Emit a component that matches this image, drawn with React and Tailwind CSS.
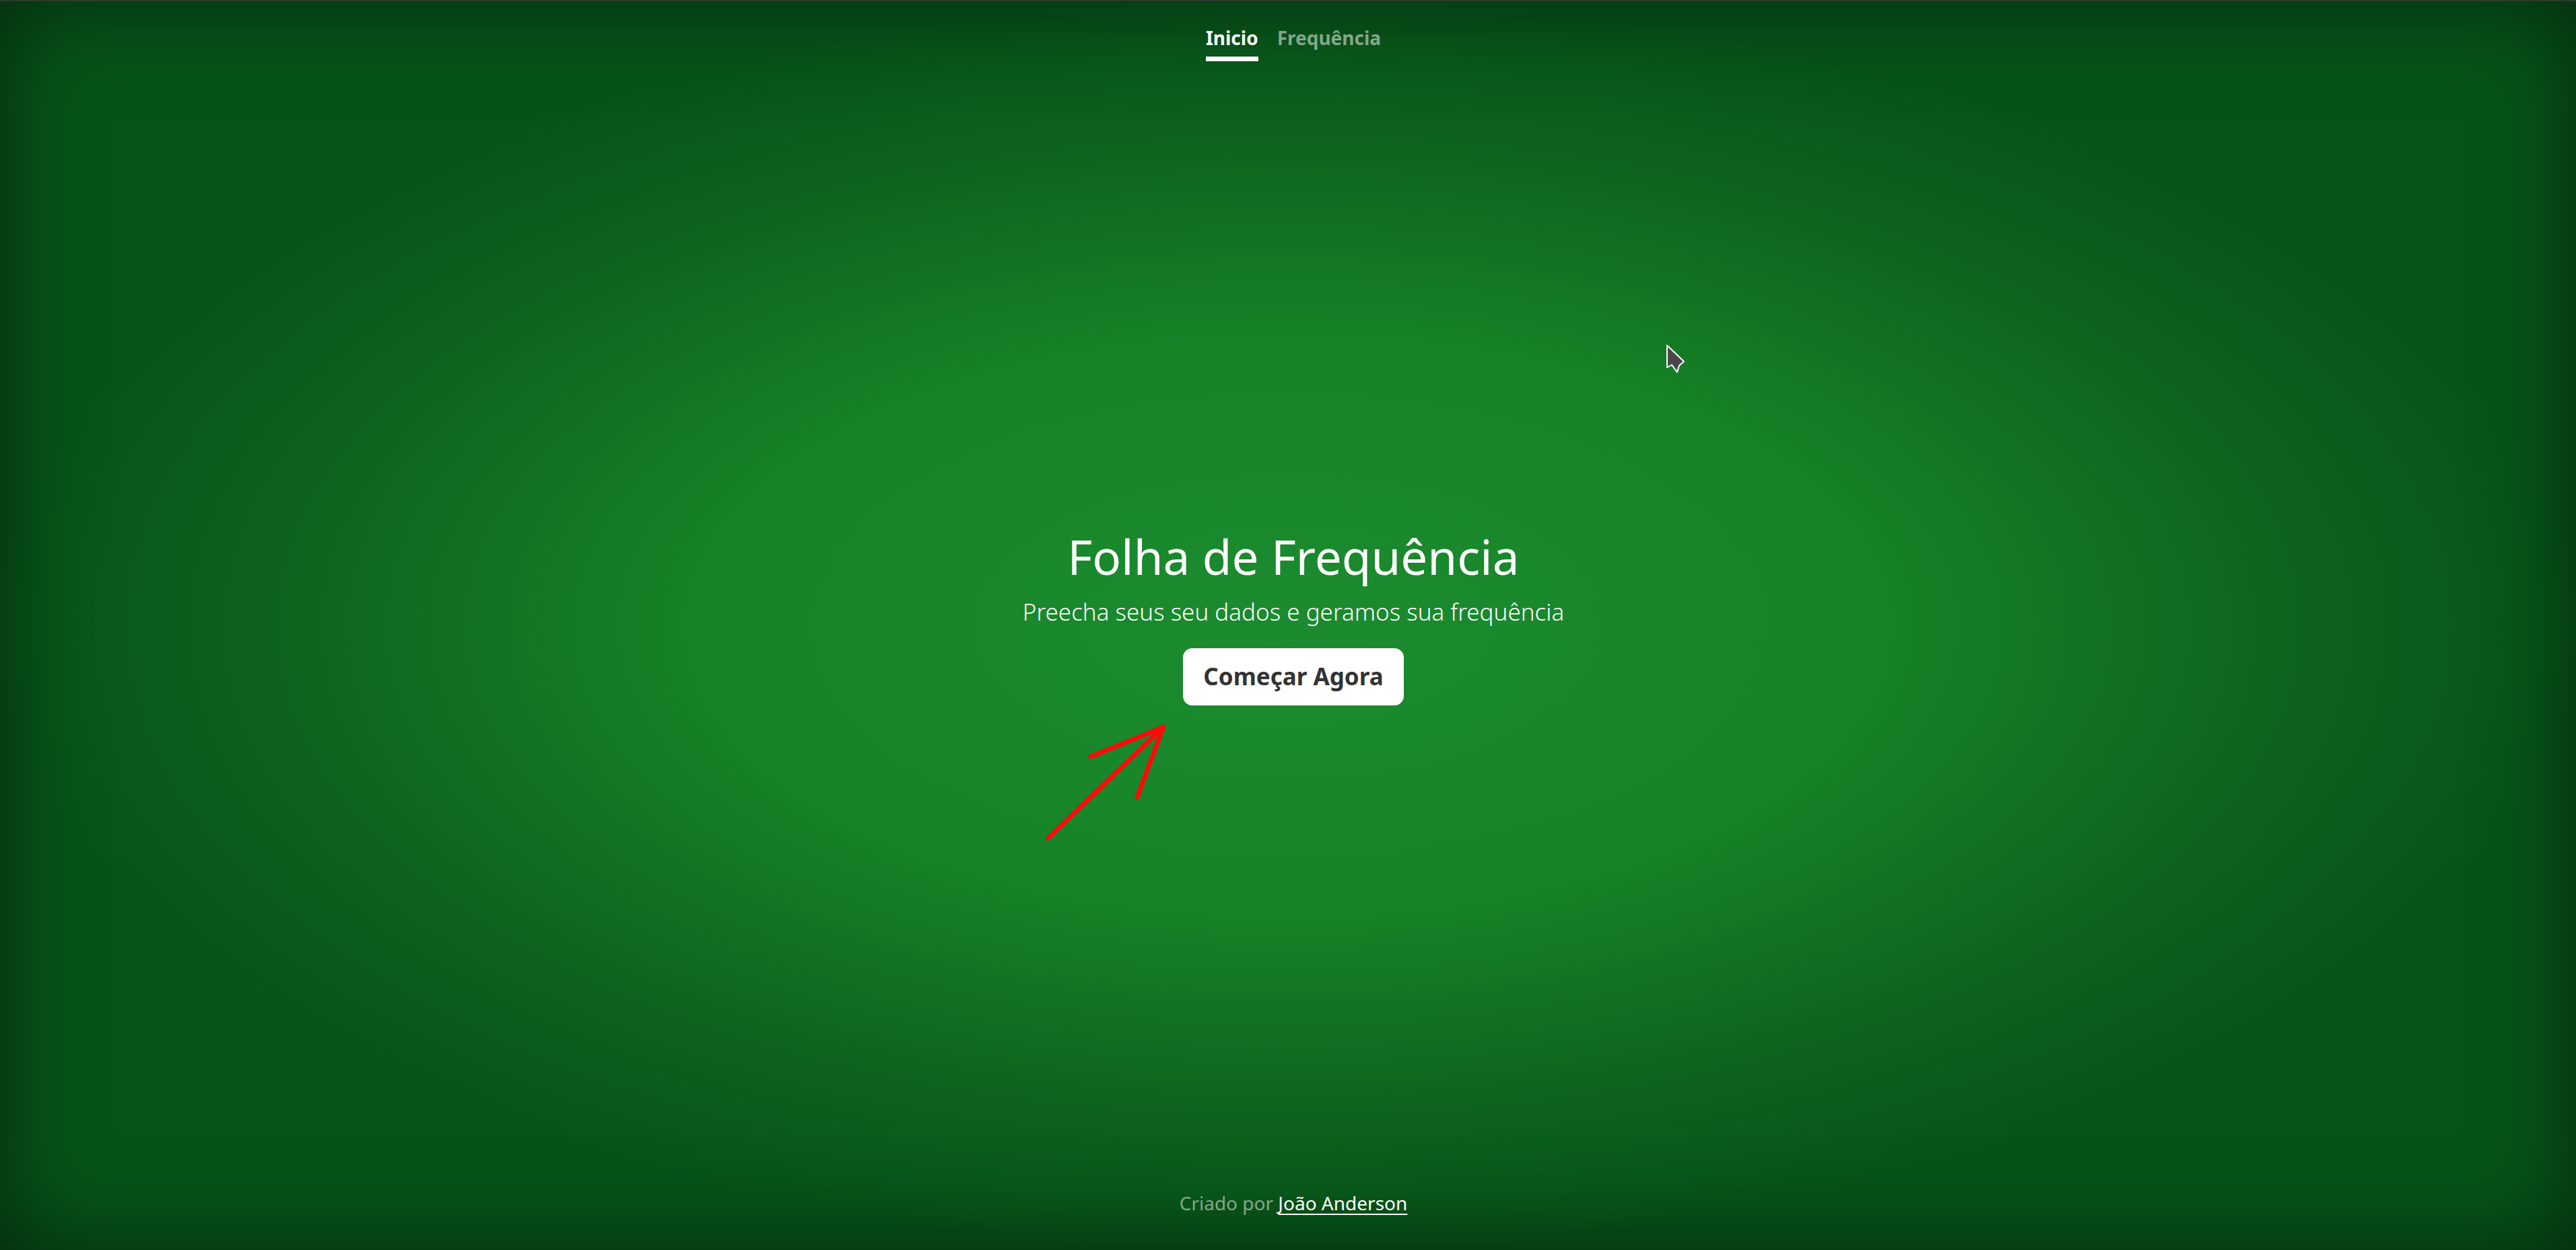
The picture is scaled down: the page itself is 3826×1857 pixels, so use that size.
import React from "react";

function Cursor() {
  return (
    <svg
      className="absolute left-[2474px] top-[509px]"
      width="30"
      height="46"
      viewBox="0 0 30 46"
    >
      <polygon
        points="2,2 2,35 9,31 17,42 20,32 27,26"
        fill="#4b4649"
        stroke="#ffffff"
        strokeWidth="2"
        strokeLinejoin="round"
      />
    </svg>
  );
}

function RedArrow() {
  return (
    <svg
      className="absolute left-[1540px] top-[1060px]"
      width="210"
      height="200"
      viewBox="0 0 210 200"
    >
      <g stroke="#ff0a0a" strokeWidth="7" strokeLinecap="round" fill="none">
        <line x1="17" y1="183" x2="188" y2="18" />
        <line x1="80" y1="62" x2="188" y2="18" />
        <line x1="149" y1="122" x2="188" y2="18" />
      </g>
    </svg>
  );
}

export default function App() {
  return (
    <div
      className="relative flex flex-col h-[1857px] w-full pl-[16px] text-white text-center border-t-2 border-[#2b3a2d] bg-[radial-gradient(ellipse_closest-side_at_center,#1c8b2f_0%,#178327_45%,#0c621d_80%,#07541a_100%)] shadow-[inset_0_0_144px_rgba(0,0,0,0.5)]"
      style={{ fontFamily: "'Noto Sans', 'Open Sans', sans-serif" }}
    >
      <header className="pt-[26px]">
        <nav className="flex justify-center gap-[28px]">
          <a className="py-[7px] border-b-[7px] border-white text-[28px] leading-[1.5] font-bold text-white">
            Inicio
          </a>
          <a className="py-[7px] border-b-[7px] border-transparent text-[28px] leading-[1.5] font-bold text-white/50">
            Frequência
          </a>
        </nav>
      </header>

      <main className="flex-1 flex flex-col items-center justify-center pb-[24px]">
        <h1 className="text-[71px] leading-[1.18] font-normal mb-[14px]">
          Folha de Frequência
        </h1>
        <p className="text-[35px] leading-[1.5] font-light mb-[28px]">
          Preecha seus seu dados e geramos sua frequência
        </p>
        <button className="px-[28px] py-[14px] text-[35px] leading-[1.5] font-bold text-[#333333] bg-white border-[2px] border-white rounded-[14px]">
          Começar Agora
        </button>
      </main>

      <footer className="pb-[49px]">
        <p className="text-[28px] leading-[1.5] text-white/50">
          Criado por{" "}
          <a className="text-white underline underline-offset-[5px] decoration-[2px]">
            João Anderson
          </a>
        </p>
      </footer>

      <RedArrow />
      <Cursor />
    </div>
  );
}
